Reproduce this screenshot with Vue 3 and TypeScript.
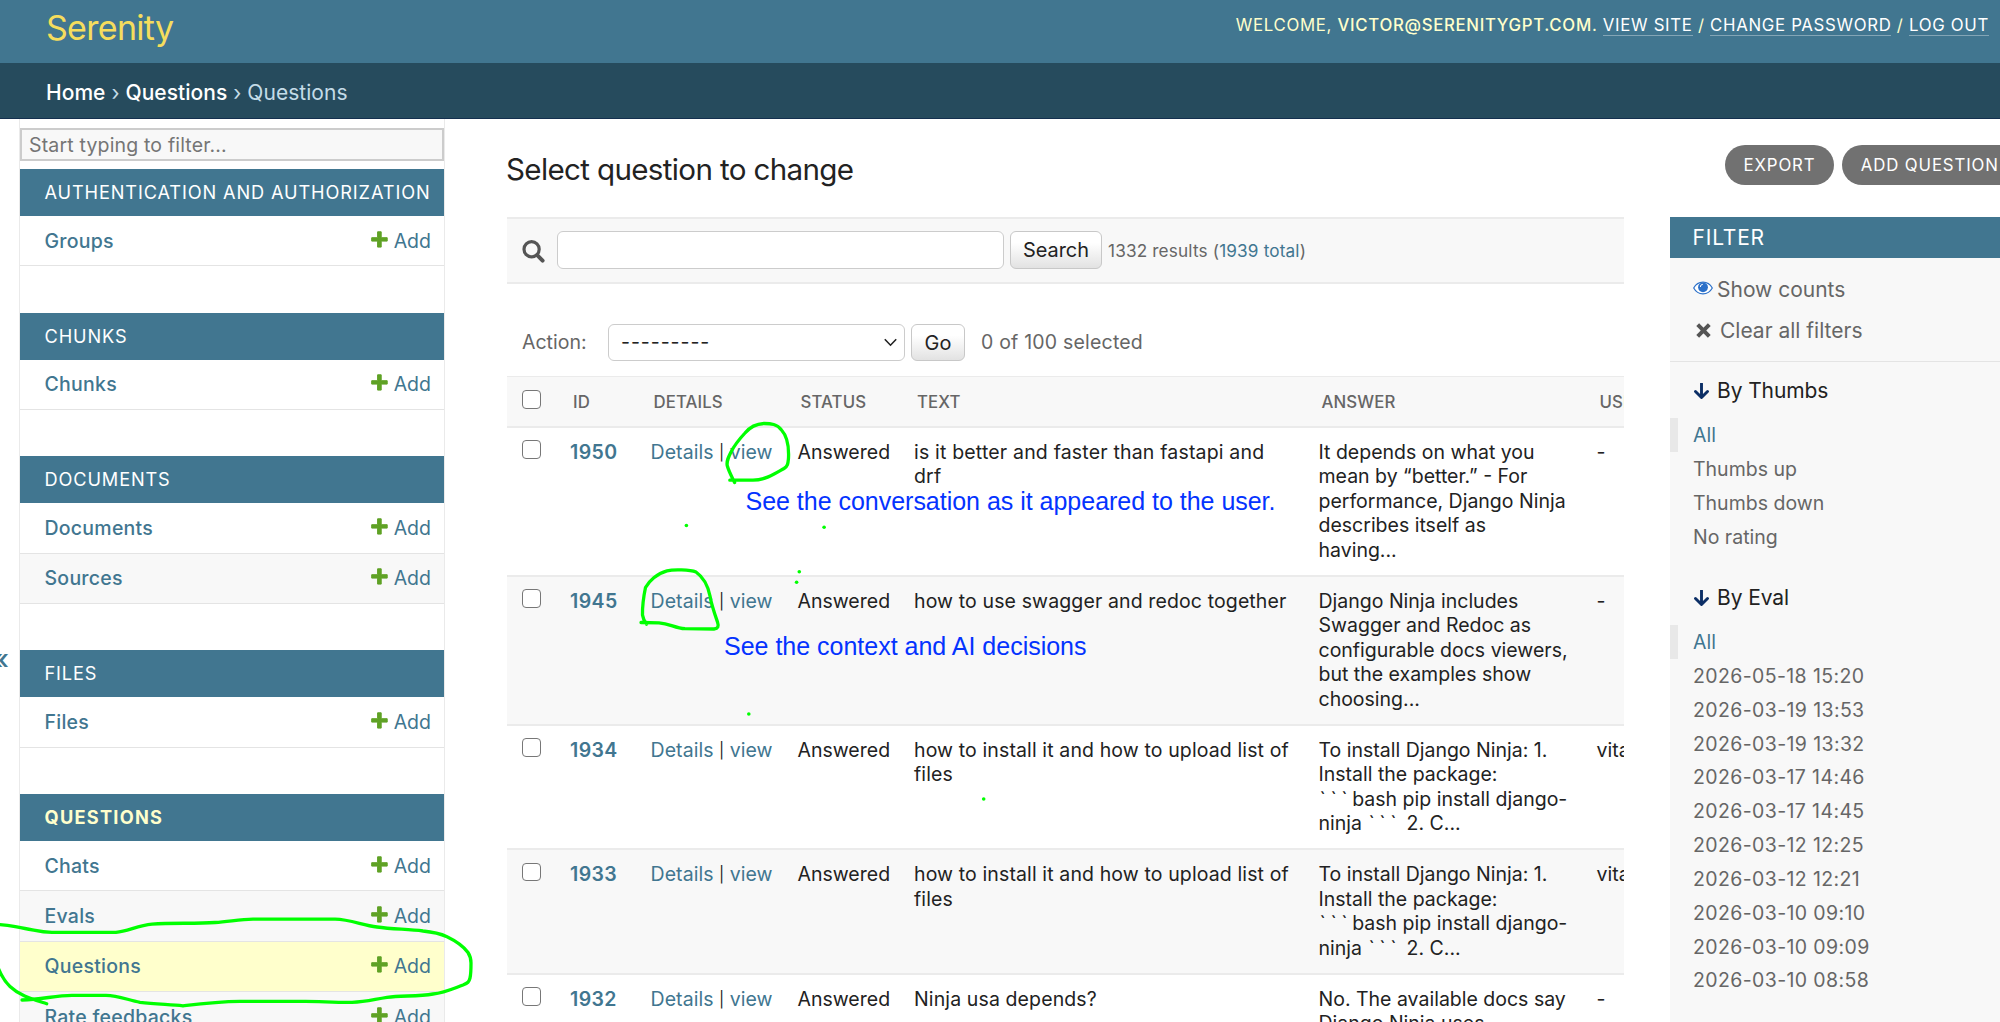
<script setup lang="ts">
interface NavItem {
  name: string
  current?: boolean
}
interface NavApp {
  title: string
  current?: boolean
  models: NavItem[]
}
interface QuestionRow {
  id: number
  text: string[]
  answer: string[]
  user: string
}
interface FilterGroup {
  title: string
  dates?: boolean
  options: string[]
}

const apps: NavApp[] = [
  { title: 'Authentication and Authorization', models: [{ name: 'Groups' }] },
  { title: 'Chunks', models: [{ name: 'Chunks' }] },
  { title: 'Documents', models: [{ name: 'Documents' }, { name: 'Sources' }] },
  { title: 'Files', models: [{ name: 'Files' }] },
  {
    title: 'Questions',
    current: true,
    models: [
      { name: 'Chats' },
      { name: 'Evals' },
      { name: 'Questions', current: true },
      { name: 'Rate feedbacks' },
    ],
  },
]

const installAnswer = ['To install Django Ninja: 1.', 'Install the package:', '```bash pip install django-', 'ninja ``` 2. C...']

const rows: QuestionRow[] = [
  {
    id: 1950,
    text: ['is it better and faster than fastapi and', 'drf'],
    answer: ['It depends on what you', 'mean by “better.” - For', 'performance, Django Ninja', 'describes itself as', 'having...'],
    user: '-',
  },
  {
    id: 1945,
    text: ['how to use swagger and redoc together'],
    answer: ['Django Ninja includes', 'Swagger and Redoc as', 'configurable docs viewers,', 'but the examples show', 'choosing...'],
    user: '-',
  },
  { id: 1934, text: ['how to install it and how to upload list of', 'files'], answer: installAnswer, user: 'vitalik' },
  { id: 1933, text: ['how to install it and how to upload list of', 'files'], answer: installAnswer, user: 'vitalik' },
  { id: 1932, text: ['Ninja usa depends?'], answer: ['No. The available docs say', 'Django Ninja uses'], user: '-' },
]

// Splits a line so that code fences can be spaced apart from the prose.
const parts = (line: string): string[] => line.split(/(```)/).filter(Boolean)

const filters: FilterGroup[] = [
  { title: 'By Thumbs', options: ['All', 'Thumbs up', 'Thumbs down', 'No rating'] },
  {
    title: 'By Eval',
    dates: true,
    options: [
      'All',
      '2026-05-18 15:20',
      '2026-03-19 13:53',
      '2026-03-19 13:32',
      '2026-03-17 14:46',
      '2026-03-17 14:45',
      '2026-03-12 12:25',
      '2026-03-12 12:21',
      '2026-03-10 09:10',
      '2026-03-10 09:09',
      '2026-03-10 08:58',
    ],
  },
]

const dots: [number, number][] = [
  [686.4, 525.5],
  [824.1, 527.3],
  [799.3, 571.7],
  [796.6, 582.3],
  [748.8, 714],
  [983.7, 799],
]
</script>

<template>
  <div class="page">
    <header class="header">
      <a class="brand">Serenity</a>
      <div class="user-tools">
        Welcome, <strong>victor@serenitygpt.com</strong>. <a>View site</a> / <a>Change password</a> / <a>Log out</a>
      </div>
    </header>

    <nav class="breadcrumbs"><a>Home</a> › <a>Questions</a> › Questions</nav>

    <div class="body">
      <div class="toggle"><span>«</span></div>

      <aside class="sidebar">
        <input class="nav-filter" type="search" placeholder="Start typing to filter..." />
        <section v-for="app in apps" :key="app.title" class="app" :class="{ current: app.current }">
          <h2>{{ app.title }}</h2>
          <div v-for="model in app.models" :key="model.name" class="model" :class="{ selected: model.current }">
            <a class="model-name">{{ model.name }}</a>
            <a class="add">
              <svg width="17" height="17" viewBox="0 0 17 17">
                <path d="M6.600 0.800h3.600v5.900h6v3.400h-6v6H6.600v-6H0.700V6.700h5.900z" fill="#5fa225" stroke="#5fa225" stroke-linejoin="round" />
              </svg>
              Add
            </a>
          </div>
        </section>
      </aside>

      <main class="main">
        <div class="title-row">
          <h1>Select question to change</h1>
          <div class="tools">
            <a>Export</a>
            <a>Add question</a>
          </div>
        </div>

        <div class="columns">
          <div class="changelist">
            <div class="toolbar">
              <svg class="search-icon" width="23" height="23" viewBox="0 0 23 23" fill="none" stroke="#555">
                <circle cx="9.600" cy="9.300" r="7.600" stroke-width="3.200" />
                <path d="M15.200 15.200l5.400 5.400" stroke-width="4" stroke-linecap="round" />
              </svg>
              <input class="search-box" type="text" />
              <button class="btn search-btn">Search</button>
              <span class="results">1332 results (<a>1939 total</a>)</span>
            </div>

            <div class="actions">
              <span class="action-label">Action:</span>
              <div class="select">
                <span>---------</span>
                <svg width="13" height="9" viewBox="0 0 13 9" fill="none" stroke="#222" stroke-width="1.600">
                  <path d="M0.800 1.200l5.700 6 5.700-6" />
                </svg>
              </div>
              <button class="btn go-btn">Go</button>
              <span class="counter">0 of 100 selected</span>
            </div>

            <table>
              <colgroup>
                <col class="c-check" />
                <col class="c-id" />
                <col class="c-details" />
                <col class="c-status" />
                <col class="c-text" />
                <col class="c-answer" />
                <col class="c-user" />
              </colgroup>
              <thead>
                <tr>
                  <th><i class="check"></i></th>
                  <th>ID</th>
                  <th>Details</th>
                  <th>Status</th>
                  <th>Text</th>
                  <th>Answer</th>
                  <th>User</th>
                </tr>
              </thead>
              <tbody>
                <tr v-for="row in rows" :key="row.id">
                  <td><i class="check"></i></td>
                  <td class="id"><a>{{ row.id }}</a></td>
                  <td class="links"><a>Details</a><span class="bar">|</span><a>view</a></td>
                  <td class="status">Answered</td>
                  <td class="question"><div v-for="line in row.text" :key="line">{{ line }}</div></td>
                  <td>
                    <div v-for="line in row.answer" :key="line" class="line">
                      <span v-for="(part, i) in parts(line)" :key="i" :class="{ fence: part === '```' }">{{ part }}</span>
                    </div>
                  </td>
                  <td>{{ row.user }}</td>
                </tr>
              </tbody>
            </table>
          </div>

          <aside class="filter">
            <h2>Filter</h2>
            <div class="filter-links">
              <a class="show-counts">
                <svg width="20" height="14" viewBox="0 0 20 14">
                  <path d="M0.700 7C5-0.800 15-0.800 19.300 7 15 14.800 5 14.800 0.700 7z" fill="#fff" stroke="#2b70c9" stroke-width="1.200" />
                  <circle cx="10" cy="6.300" r="4.900" fill="#2b70c9" />
                  <path d="M7.300 6a2.700 2.700 0 0 1 2.500-2.700" fill="none" stroke="#fff" stroke-width="1" />
                </svg>
                Show counts
              </a>
              <a class="clear-all">
                <svg width="15" height="15" viewBox="0 0 15 15" stroke="#555" stroke-width="4">
                  <path d="M1.700 1.700l11.600 11.600M13.300 1.700L1.700 13.300" />
                </svg>
                Clear all filters
              </a>
            </div>
            <section v-for="group in filters" :key="group.title" class="filter-group" :class="{ dates: group.dates }">
              <h3>
                <svg width="15" height="17" viewBox="0 0 15 17" fill="none" stroke="#0c2f66" stroke-width="2.900">
                  <path d="M7.500 0.500v14M1.500 8.500l6 6 6-6" stroke-linejoin="round" stroke-linecap="round" />
                </svg>
                {{ group.title }}
              </h3>
              <ul>
                <li v-for="(option, i) in group.options" :key="option" :class="{ active: i === 0 }">{{ option }}</li>
              </ul>
            </section>
          </aside>
        </div>
      </main>
    </div>

    <svg class="notes" width="2000" height="1022" viewBox="0 0 2000 1022">
      <g fill="none" stroke="#00ff00" stroke-width="3.300" stroke-linecap="round" stroke-linejoin="round">
        <path
          d="M-4 924.500C10 924.500 14 927 25 928.500C35 930 40 932.300 52 932.300H116C128 931 138 925.500 152 924.200C172 922.500 195 924 215 922.500C230 921.500 240 919.300 253 919.200H335C350 919.500 362 925 377 927C393 929.300 408 929 423 931C433 932 440 933.500 447 936.700C456 941 463 945.500 468 952.500C471 957 471 959 471 963C471 970 471 974 470 978C469 982 468 983 463 985C452 989 445 992.500 433 994C418 996.500 402 995.500 387 997.300C373 999.500 366 1002 352 1002.300C335 1002.500 320 1001.300 305 1001.300H240C218 1001.500 202 1003.500 183 1005.800C170 1004.500 155 1004 140 1002.300C128 1000 118 995.500 106 995.300H72C55 995.500 42 999.500 22 1000"
        />
        <path d="M-4 962C0 974 4 981 10 986.500C20 996 32 999 46.700 1003.700" />
        <path d="M729.800 480.200H753C766 480 776 473 784 468.500C788 466 788 463 788.500 458C789 447 787 436 781.500 430C777 424 771 423.500 764 423.500C755 424 750 427 745 433C739 439.500 734 446 731 452C728 458 726.500 461 727.200 465.500C729 472 732 477 734.600 482.500" />
        <path d="M641 622.500L659 622.800C670 623.500 675 628.300 685 628.700L714 629C718 628.500 719 626.500 717.500 622C714 612 711.500 605 710 596C708 586 703 577 696 572C690 569.500 673 569.300 667 570.800C657 573.500 649 581 645.500 587.500C643.500 597 642.300 606 642.500 615C643 619 645 622 646.600 624.200" />
      </g>
      <circle v-for="([x, y], i) in dots" :key="i" :cx="x" :cy="y" r="1.800" fill="#00ff00" />
      <g fill="#0433ff" font-family="'Liberation Sans', Arial, sans-serif" font-size="25">
        <text x="745.500" y="509.800" textLength="530" lengthAdjust="spacing">See the conversation as it appeared to the user.</text>
        <text x="724" y="655" textLength="362.500" lengthAdjust="spacing">See the context and AI decisions</text>
      </g>
    </svg>
  </div>
</template>

<style>
html,
body {
  margin: 0;
  overflow: hidden;
}
</style>

<style scoped>
* {
  box-sizing: border-box;
}
.page {
  position: relative;
  width: 2000px;
  height: 1022px;
  overflow: hidden;
  display: flex;
  flex-direction: column;
  background: #fff;
  color: #222;
  font-family: Inter, 'Noto Sans', sans-serif;
  font-size: 19.500px;
}
h1,
h2,
h3,
ul {
  margin: 0;
  padding: 0;
  font-weight: 400;
}
.header {
  flex: none;
  height: 63px;
  background: #417690;
  display: flex;
  justify-content: space-between;
  padding: 0 11px 0 46px;
}
.brand {
  color: #f5dd5d;
  font-size: 34px;
  line-height: 56px;
  letter-spacing: -0.700px;
  font-weight: 400;
}
.user-tools {
  color: #ffc;
  font-size: 16.800px;
  line-height: 22px;
  padding-top: 14px;
  letter-spacing: 0.680px;
  text-transform: uppercase;
  white-space: nowrap;
}
.user-tools strong {
  font-weight: 500;
}
.user-tools a {
  display: inline-block;
  line-height: 20px;
  color: #fff;
  border-bottom: 1px solid rgba(255, 255, 255, 0.350);
}
.breadcrumbs {
  flex: none;
  height: 56px;
  line-height: 59px;
  padding-left: 46px;
  background: #264b5d;
  border-bottom: 1px solid #14304f;
  color: #c4dce8;
  font-size: 21px;
  letter-spacing: 0.040px;
  white-space: pre;
}
.breadcrumbs a {
  color: #fff;
  font-weight: 450;
}
.body {
  flex: 1;
  min-height: 0;
  display: flex;
}
.toggle {
  flex: none;
  width: 19px;
  display: flex;
  align-items: center;
  color: #417690;
  font-size: 28px;
  font-weight: 500;
  overflow: hidden;
}
.toggle span {
  margin: 177px 0 0 -8px;
}
.sidebar {
  flex: none;
  width: 426px;
  border: solid #eaeaea;
  border-width: 0 1px;
  padding-top: 9px;
}
.nav-filter {
  display: block;
  width: 424px;
  height: 33px;
  margin: 0 0 8px;
  padding: 0 7px;
  border: 2px solid #ccc;
  background: #f8f8f8;
  font: 19.500px Inter, sans-serif;
  letter-spacing: 0.170px;
  border-radius: 0;
  outline: none;
  -webkit-appearance: none;
  appearance: none;
}
.nav-filter::placeholder {
  color: #757575;
}
.app {
  margin-bottom: 46.400px;
}
.app h2 {
  height: 47px;
  line-height: 47px;
  padding-left: 24.500px;
  background: #417690;
  color: #fff;
  font-size: 18.200px;
  letter-spacing: 0.870px;
  text-transform: uppercase;
  white-space: nowrap;
}
.app.current h2 {
  color: #ffc;
  font-weight: 700;
  letter-spacing: 1.250px;
}
.model {
  height: 50.300px;
  border-bottom: 1px solid #e4e4e4;
  padding: 0 13px 0 24.500px;
  display: flex;
  align-items: center;
  justify-content: space-between;
  color: #417690;
}
.model:nth-child(odd) {
  background: #f8f8f8;
}
.model.selected {
  background: #ffc;
}
.model-name {
  font-weight: 500;
  letter-spacing: 0.250px;
}
.add {
  display: flex;
  align-items: center;
  gap: 6px;
}
.add svg {
  margin-top: -3px;
}
.main {
  flex: 1;
  min-width: 0;
  padding-left: 62px;
}
.title-row {
  height: 98px;
  display: flex;
  justify-content: space-between;
}
h1 {
  font-size: 29.600px;
  font-weight: 400;
  line-height: 36px;
  padding-top: 32px;
  letter-spacing: -0.660px;
  white-space: nowrap;
  margin-left: -1px;
}
.tools {
  display: flex;
  gap: 8px;
  padding-top: 26px;
  margin-right: -17.500px;
}
.tools a {
  height: 40px;
  line-height: 40px;
  padding: 0 18.700px;
  border-radius: 20px;
  background: #717171;
  color: #fff;
  font-size: 16.800px;
  letter-spacing: 0.870px;
  text-transform: uppercase;
  white-space: nowrap;
}
.columns {
  display: flex;
  align-items: flex-start;
}
.changelist {
  flex: none;
  width: 1117px;
  margin-right: 46px;
  overflow: hidden;
}
.toolbar {
  height: 67px;
  border: solid #ebebeb;
  border-width: 2px 0;
  background: #f8f8f8;
  display: flex;
  align-items: center;
  padding: 0 0 1px 15px;
}
.search-icon {
  margin-right: 12px;
  margin-top: 2px;
}
.search-box {
  width: 447px;
  height: 38px;
  border: 1.500px solid #ccc;
  border-radius: 6px;
  background: #fff;
  margin: 0 6px 0 0;
  padding: 0;
}
.btn {
  height: 38px;
  padding: 0;
  border: 1px solid #c8c8c8;
  border-radius: 6px;
  background: linear-gradient(#fff 30%, #e2e2e2);
  color: #222;
  font: 19.900px Inter, sans-serif;
}
.search-btn {
  width: 92px;
}
.results {
  margin-left: 6px;
  font-size: 17.200px;
  letter-spacing: 0.150px;
  color: #666;
}
.results a,
td a {
  color: #417690;
}
.actions {
  height: 92px;
  padding: 40px 0 0 15px;
  display: flex;
  line-height: 37px;
  color: #666;
}
.action-label {
  width: 86px;
}
.counter {
  letter-spacing: 0.200px;
}
.select {
  width: 297px;
  height: 37px;
  line-height: 37px;
  border: 1.500px solid #ccc;
  border-radius: 6px;
  margin-right: 6px;
  padding: 0 7px 0 12px;
  display: flex;
  align-items: center;
  justify-content: space-between;
  color: #222;
}
.select span {
  letter-spacing: 0.950px;
}
.go-btn {
  width: 54px;
  height: 37px;
  margin-right: 16px;
}
table {
  width: 1160px;
  table-layout: fixed;
  border-collapse: separate;
  border-spacing: 0;
}
.c-check {
  width: 51px;
}
.c-id {
  width: 80.500px;
}
.c-details {
  width: 147px;
}
.c-status {
  width: 116.500px;
}
.c-text {
  width: 404.500px;
}
.c-answer {
  width: 278px;
}
th {
  height: 51.500px;
  padding: 1px 0 0 15px;
  border: solid #ebebeb;
  border-width: 1px 0 2px;
  background: #f8f8f8;
  color: #666;
  font-size: 16.800px;
  letter-spacing: 0.100px;
  font-weight: 500;
  text-align: left;
  text-transform: uppercase;
  white-space: nowrap;
}
td {
  padding: 12px 0 12.500px 12px;
  border-bottom: 2px solid #ebebeb;
  line-height: 24.500px;
  vertical-align: top;
  white-space: nowrap;
}
th:first-child,
td:first-child {
  padding-left: 15px;
}
tbody tr:nth-child(even) td {
  background: #f8f8f8;
}
.id a {
  font-weight: 600;
  letter-spacing: 0.400px;
}
.links {
  letter-spacing: 0.080px;
}
.bar {
  display: inline-block;
  width: 16px;
  line-height: 20px;
  text-align: center;
  font-size: 15.500px;
  vertical-align: 1px;
}
.question {
  letter-spacing: 0.120px;
}
tbody tr:first-child .question {
  letter-spacing: 0.180px;
}
.line {
  display: flex;
  white-space: pre;
}
.fence {
  letter-spacing: 4.600px;
  padding-left: 1px;
}
.check {
  display: block;
  width: 18.500px;
  height: 18.500px;
  border: 1.500px solid #777;
  border-radius: 4px;
  background: #fff;
}
th .check {
  margin-top: -5px;
}
td .check {
  margin-top: 0.500px;
}
.filter {
  flex: 1;
  height: 805px;
  background: #f8f8f8;
}
.filter h2 {
  height: 41px;
  line-height: 41px;
  padding-left: 22.500px;
  background: #417690;
  color: #fff;
  font-size: 21px;
  letter-spacing: 0.800px;
  text-transform: uppercase;
}
.filter-links {
  height: 104px;
  padding: 11px 0 0 23px;
  border-bottom: 1px solid #e4e4e4;
  color: #666;
  font-size: 21px;
  line-height: 41px;
}
.filter-links a {
  display: flex;
  align-items: center;
}
.show-counts {
  gap: 4px;
}
.show-counts svg {
  margin-top: -3px;
}
.clear-all {
  gap: 9px;
}
.clear-all svg {
  margin: -1px 0 0 3px;
}
.filter-group {
  height: 207px;
}
.filter h3 {
  height: 56px;
  padding: 15px 0 0 24px;
  display: flex;
  gap: 8px;
  font-size: 21px;
  letter-spacing: -0.100px;
  line-height: 28px;
}
.filter h3 svg {
  margin-top: 6px;
}
li {
  list-style: none;
  height: 33.850px;
  line-height: 35.500px;
  padding-left: 23px;
  color: #666;
}
.dates li {
  letter-spacing: 0.380px;
}
li.active {
  color: #417690;
  border-left: 8px solid #e8e8e8;
  padding-left: 15px;
  letter-spacing: 0;
}
.notes {
  position: absolute;
  left: 0;
  top: 0;
  pointer-events: none;
}
</style>
